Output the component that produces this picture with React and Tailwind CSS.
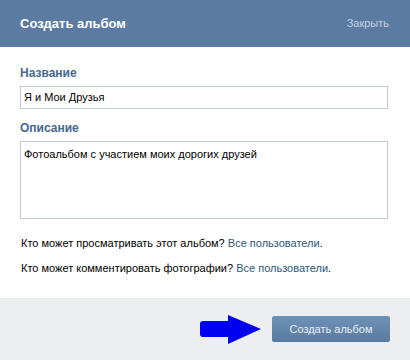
import React from "react";

const Field = ({ label, children }) => (
  <div className="flex flex-col">
    <div className="text-[12px] font-bold text-[#45688e] leading-[15px] mb-[5px]">
      {label}
    </div>
    {children}
  </div>
);

const Arrow = () => (
  <svg width="61" height="29" viewBox="0 0 61 29" className="block">
    <path d="M3 6 H28 V0 L61 14 L28 29 V22 H3 Q0 22 0 19 V9 Q0 6 3 6 Z" fill="#0000f0" />
  </svg>
);

export default function App() {
  return (
    <div className="w-[410px] h-[360px] bg-white flex flex-col font-['Liberation_Sans',Arial,sans-serif] text-[11px] text-black">
      {/* HEADER */}
      <div className="h-[47px] bg-[#5b7ba2] flex items-center justify-between pl-[20px] pr-[21px]">
        <span className="text-white font-bold text-[13px]">Создать альбом</span>
        <span className="text-[#c3d1e0] text-[11px]">Закрыть</span>
      </div>

      {/* BODY */}
      <div className="flex-1 flex flex-col pl-[20px] pr-[22px] pt-[19px]">
        <Field label="Название">
          <div className="h-[23px] border border-[#c0cad5] flex items-center px-[3px]">
            Я и Мои Друзья
          </div>
        </Field>

        <div className="mt-[12px]">
          <Field label="Описание">
            <div className="h-[78px] border border-[#c0cad5] px-[3px] pt-[4px]">
              Фотоальбом с участием моих дорогих друзей
            </div>
          </Field>
        </div>

        <div className="mt-[17px] pl-[1px] flex flex-col gap-[11px] leading-[14px]">
          <p>
            Кто может просматривать этот альбом?{" "}
            <span className="text-[#2b587a]">Все пользователи</span>.
          </p>
          <p>
            Кто может комментировать фотографии?{" "}
            <span className="text-[#2b587a]">Все пользователи</span>.
          </p>
        </div>
      </div>

      {/* FOOTER */}
      <div className="h-[62px] bg-[#edeef0] flex items-center justify-end pr-[20px] gap-[11px]">
        <Arrow />
        <button className="w-[118px] h-[26px] rounded-[2px] bg-gradient-to-b from-[#7092b7] to-[#5a7aa0] text-[#e8eef5] text-[11px]">
          Создать альбом
        </button>
      </div>
    </div>
  );
}
